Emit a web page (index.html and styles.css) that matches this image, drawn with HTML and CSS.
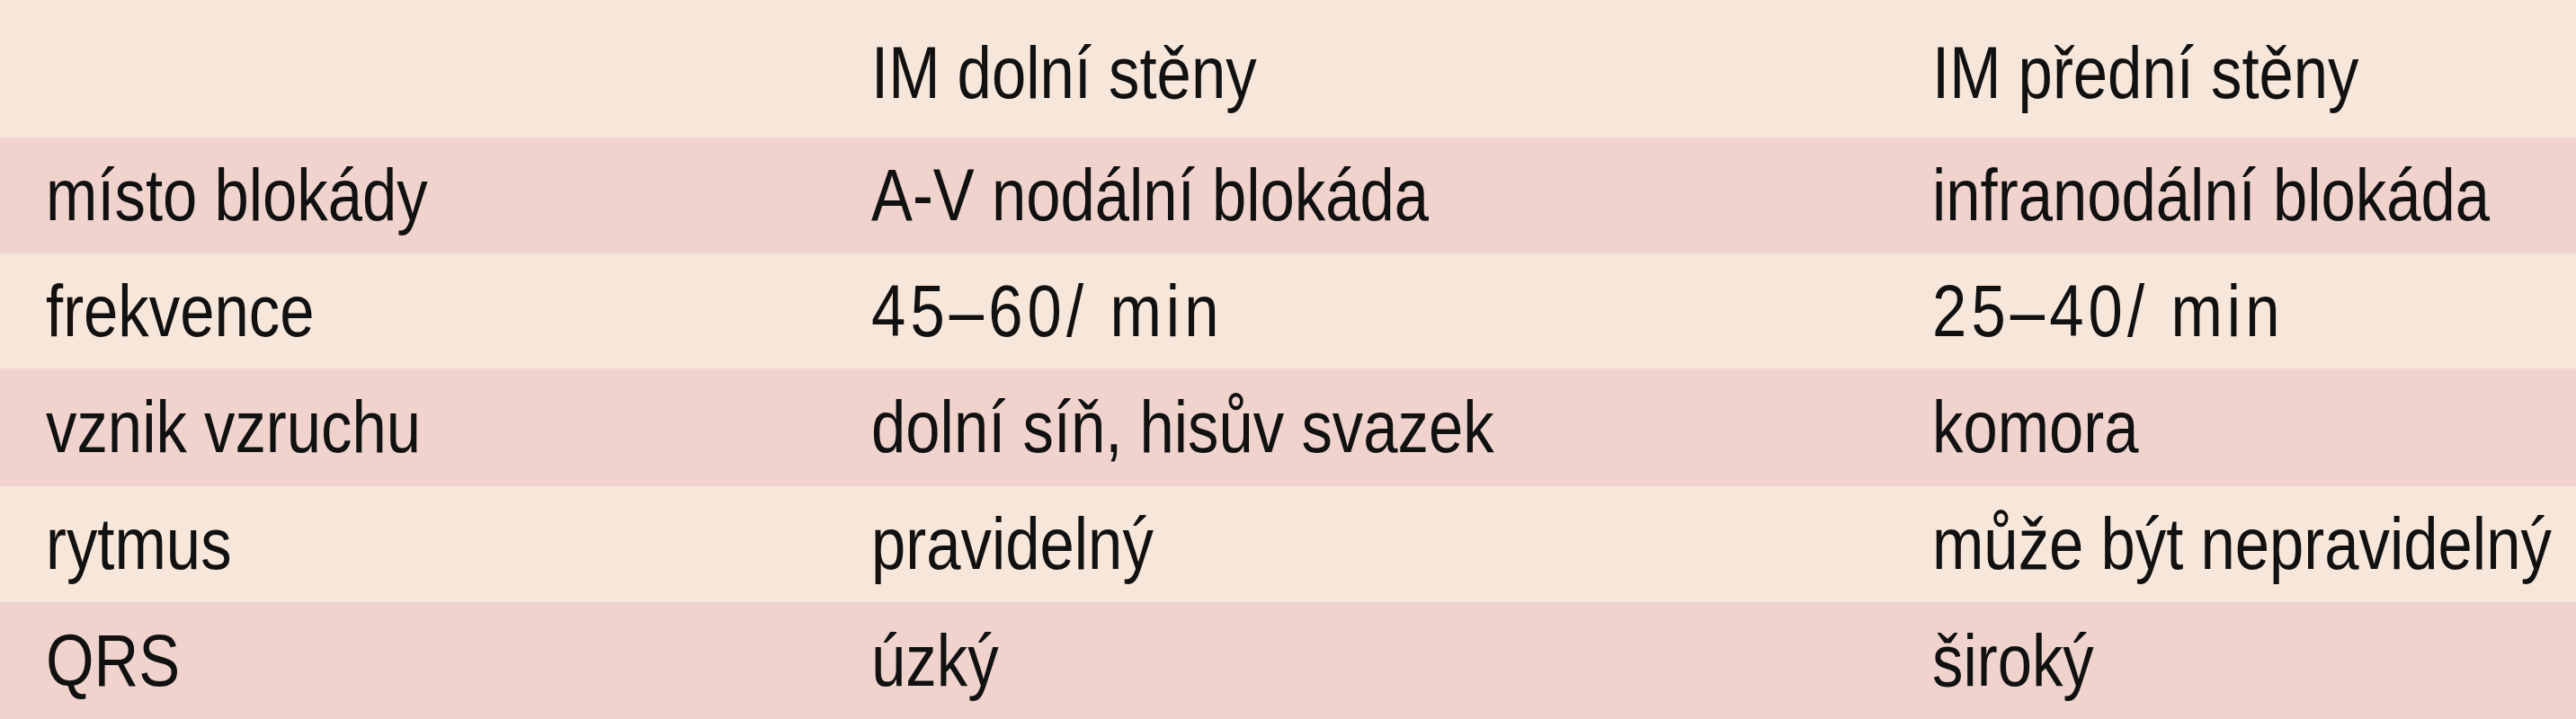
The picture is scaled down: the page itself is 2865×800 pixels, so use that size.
FILE: index.html
```html
<!DOCTYPE html>
<html lang="cs">
<head>
<meta charset="utf-8">
<title>Blokády</title>
<link rel="stylesheet" href="styles.css">
</head>
<body>
<div class="table">
  <div class="row head"><div class="cell"></div><div class="cell"><span class="t">IM dolní stěny</span></div><div class="cell"><span class="t">IM přední stěny</span></div></div>
  <div class="row odd r1"><div class="cell"><span class="t">místo blokády</span></div><div class="cell"><span class="t">A-V nodální blokáda</span></div><div class="cell"><span class="t">infranodální blokáda</span></div></div>
  <div class="row even r2"><div class="cell"><span class="t">frekvence</span></div><div class="cell"><span class="t num">45–60/ min</span></div><div class="cell"><span class="t num">25–40/ min</span></div></div>
  <div class="row odd r3"><div class="cell"><span class="t">vznik vzruchu</span></div><div class="cell"><span class="t">dolní síň, hisův svazek</span></div><div class="cell"><span class="t">komora</span></div></div>
  <div class="row even r4"><div class="cell"><span class="t">rytmus</span></div><div class="cell"><span class="t">pravidelný</span></div><div class="cell"><span class="t">může být nepravidelný</span></div></div>
  <div class="row odd r5"><div class="cell"><span class="t">QRS</span></div><div class="cell"><span class="t">úzký</span></div><div class="cell"><span class="t">široký</span></div></div>
</div>
</body>
</html>
```

FILE: styles.css
```css
html, body {
  margin: 0;
  padding: 0;
  background: #f7e6da;
}
.table {
  width: 2865px;
  height: 800px;
  overflow: hidden;
  display: flex;
  flex-direction: column;
  font-family: "Liberation Sans", Arial, sans-serif;
  font-size: 81px;
  color: #111;
}
.row {
  display: grid;
  grid-template-columns: 918px 1180px 767px;
  align-items: center;
}
.cell {
  padding-left: 51px;
  white-space: nowrap;
  line-height: 1;
  overflow: visible;
}
.t {
  display: inline-block;
  transform: scaleX(0.85);
  transform-origin: left center;
}
.num { letter-spacing: 6px; }
.head { height: 153px; background: #f7e6da; padding-top: 10px; box-sizing: border-box; }
.odd { background: #efd3cc; }
.even { background: #f7e6da; }
.r1 { height: 129px; }
.r2 { height: 128px; }
.r3 { height: 131px; }
.r4 { height: 129px; }
.r5 { height: 130px; }
```
